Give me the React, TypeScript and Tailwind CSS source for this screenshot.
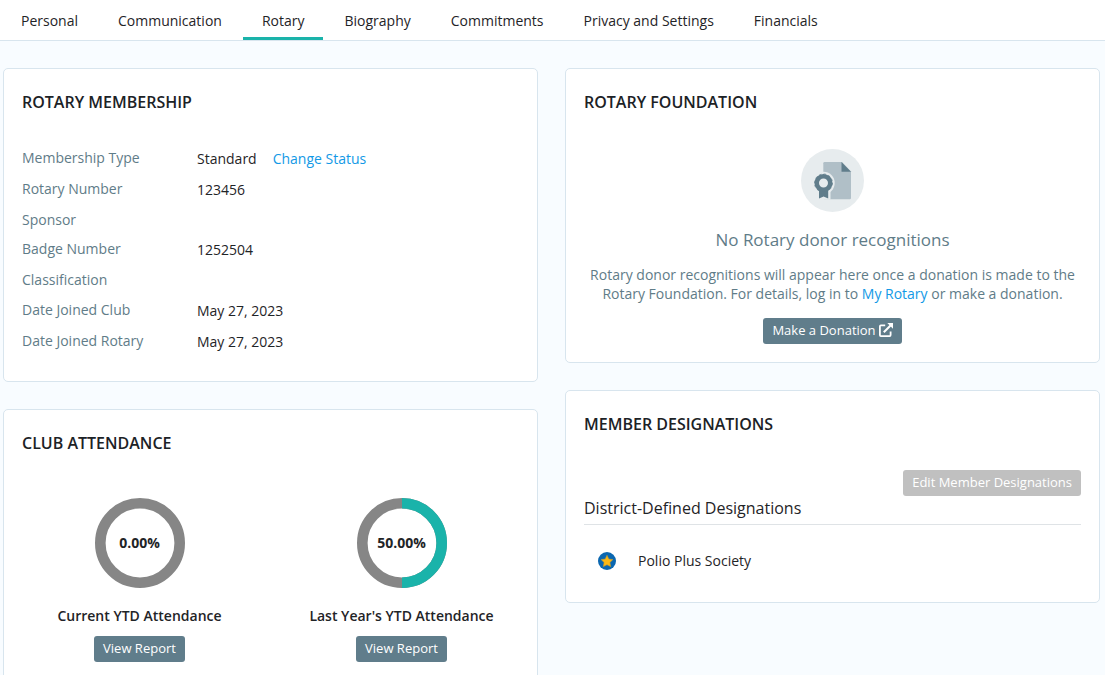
import type { ReactNode } from "react";

const tabs = [
  "Personal",
  "Communication",
  "Rotary",
  "Biography",
  "Commitments",
  "Privacy and Settings",
  "Financials",
];

const membership: { label: string; value?: string; action?: string }[] = [
  { label: "Membership Type", value: "Standard", action: "Change Status" },
  { label: "Rotary Number", value: "123456" },
  { label: "Sponsor" },
  { label: "Badge Number", value: "1252504" },
  { label: "Classification" },
  { label: "Date Joined Club", value: "May 27, 2023" },
  { label: "Date Joined Rotary", value: "May 27, 2023" },
];

const attendance = [
  { label: "Current YTD Attendance", percent: 0 },
  { label: "Last Year's YTD Attendance", percent: 50 },
];

function Card({ title, children }: { title: string; children: ReactNode }) {
  return (
    <section className="rounded-[5px] border border-[#d8e5ee] bg-white px-[18px] pt-[21px]">
      <h2 className="text-base leading-6 font-semibold text-[#1c2226] uppercase">{title}</h2>
      {children}
    </section>
  );
}

function Ring({ percent }: { percent: number }) {
  const length = 2 * Math.PI * 40;
  return (
    <div className="grid size-[90px] place-items-center">
      <svg viewBox="0 0 90 90" className="col-start-1 row-start-1 size-full" aria-hidden="true">
        <circle cx="45" cy="45" r="39.7" fill="none" stroke="#868686" strokeWidth="10.6" />
        {percent > 0 && (
          <circle
            cx="45"
            cy="45"
            r="39.7"
            fill="none"
            stroke="#1ab3aa"
            strokeWidth="10.6"
            pathLength={length}
            strokeDasharray={`${(length * percent) / 100} ${length}`}
            transform="rotate(-90 45 45)"
          />
        )}
      </svg>
      <span className="col-start-1 row-start-1 text-sm leading-5 font-bold">{percent.toFixed(2)}%</span>
    </div>
  );
}

function CertificateIcon() {
  return (
    <svg viewBox="0 0 63 63" className="size-[63px]" aria-hidden="true">
      <circle cx="31.5" cy="31.5" r="31.5" fill="#e7ecee" />
      <path
        d="M23.5 13H41l9 9.500V49a1.200 1.200 0 0 1-1.200 1.200H23.500A1.200 1.200 0 0 1 22.300 49V14.200A1.200 1.200 0 0 1 23.500 13Z"
        fill="#b0bfc7"
      />
      <path d="M40.500 13v9.800H50Z" fill="#607d8b" />
      <circle cx="22.500" cy="34" r="11.200" fill="#e7ecee" />
      <path d="M16 40h13.500v10.500H16Z" fill="#e7ecee" />
      <path d="M18 40h9.200v9.600L22.600 47.400 18 49.600Z" fill="#607d8b" />
      <circle cx="22.500" cy="34" r="6.800" fill="#e7ecee" stroke="#607d8b" strokeWidth="4.600" />
      <circle cx="22.500" cy="34" r="9" fill="none" stroke="#607d8b" strokeWidth=".7" strokeDasharray="2.400 2.300" />
    </svg>
  );
}

function ExternalIcon() {
  return (
    <svg
      viewBox="0 0 14 14"
      className="size-[14px]"
      fill="none"
      stroke="currentColor"
      strokeWidth="1.800"
      aria-hidden="true"
    >
      <path d="M6.200 2.400H1.900a1 1 0 0 0-1 1v8.700a1 1 0 0 0 1 1h8.700a1 1 0 0 0 1-1V8.500" />
      <path d="M4.800 9.200 12 2" strokeWidth="2" />
      <path d="M8.300 0H14v5.700Z" fill="currentColor" stroke="none" />
    </svg>
  );
}

function StarBadge() {
  return (
    <svg viewBox="0 0 18 18" className="size-[18px]" aria-hidden="true">
      <circle cx="9" cy="9" r="9" fill="#0b67b0" />
      <path
        d="m9 3.300 1.800 3.800 4.100.5-3 2.900.8 4.100L9 12.700l-3.700 1.900.8-4.100-3-2.900 4.100-.5Z"
        fill="#fdb913"
        stroke="#c39a30"
        strokeWidth=".6"
        strokeLinejoin="round"
      />
    </svg>
  );
}

const button =
  "inline-flex h-[26px] items-center gap-[3px] rounded-[3px] bg-[#607d8b] px-[9px] pb-[2px] text-[13px] leading-5 text-white";

export default function App() {
  return (
    <div className="min-h-screen bg-[#f8fcff] font-['Open_Sans',sans-serif] text-sm leading-5 text-[#1f2427]">
      <nav aria-label="Member profile" className="flex gap-[2px] border-b border-[#d8e5ee] bg-white pl-[2px]">
        {tabs.map((tab) => (
          <a
            key={tab}
            href="#"
            aria-current={tab === "Rotary" ? "page" : undefined}
            className={`border-b-[3px] px-[19px] pt-[11px] pb-[6px] whitespace-nowrap ${
              tab === "Rotary" ? "border-[#1ab3aa]" : "border-transparent"
            }`}
          >
            {tab}
          </a>
        ))}
      </nav>

      <main className="grid grid-cols-2 items-start gap-[27px] pt-[27px] pr-[5px] pl-[3px]">
        <div className="grid gap-[27px]">
          <Card title="Rotary Membership">
            <dl className="mt-[34px] mb-[29px] grid min-h-[204px] content-between">
              {membership.map(({ label, value, action }) => (
                <div key={label} className="grid grid-cols-[175px_1fr]">
                  <dt className="leading-5 text-[#5f7c88]">{label}</dt>
                  <dd className="flex gap-4 pt-px leading-5">
                    {value && <span>{value}</span>}
                    {action && (
                      <a href="#" className="text-[#1299e6]">
                        {action}
                      </a>
                    )}
                  </dd>
                </div>
              ))}
            </dl>
          </Card>

          <Card title="Club Attendance">
            <div className="mt-[43px] grid grid-cols-2 gap-[27px] pb-8">
              {attendance.map(({ label, percent }) => (
                <div key={label} className="flex flex-col items-center">
                  <Ring percent={percent} />
                  <h3 className="mt-[18px] mb-[10px] font-semibold">{label}</h3>
                  <button type="button" className={button}>
                    View Report
                  </button>
                </div>
              ))}
            </div>
          </Card>
        </div>

        <div className="grid gap-[27px]">
          <Card title="Rotary Foundation">
            <div className="mt-[35px] flex flex-col items-center pb-[18px] text-center text-[#5f7c88]">
              <CertificateIcon />
              <h3 className="mt-4 text-[17px] leading-6">No Rotary donor recognitions</h3>
              <p className="mt-[13px] leading-[19px]">
                Rotary donor recognitions will appear here once a donation is made to the Rotary Foundation. For
                details, log in to{" "}
                <a href="#" className="text-[#1299e6]">
                  My Rotary
                </a>{" "}
                or make a donation.
              </p>
              <button type="button" className={`${button} mt-[15px]`}>
                Make a Donation
                <ExternalIcon />
              </button>
            </div>
          </Card>

          <Card title="Member Designations">
            <div className="mt-[34px] flex justify-end">
              <button
                type="button"
                disabled
                className="inline-flex h-[26px] items-center rounded-[3px] bg-[#c0c0c0] px-[9px] pb-[2px] text-[13px] leading-5 text-white"
              >
                Edit Member Designations
              </button>
            </div>
            <h3 className="border-b border-[#dfe3e6] pb-1 text-base leading-6">District-Defined Designations</h3>
            <div className="flex items-center gap-[22px] pt-[26px] pb-[31px] pl-[14px]">
              <StarBadge />
              <span>Polio Plus Society</span>
            </div>
          </Card>
        </div>
      </main>
    </div>
  );
}
